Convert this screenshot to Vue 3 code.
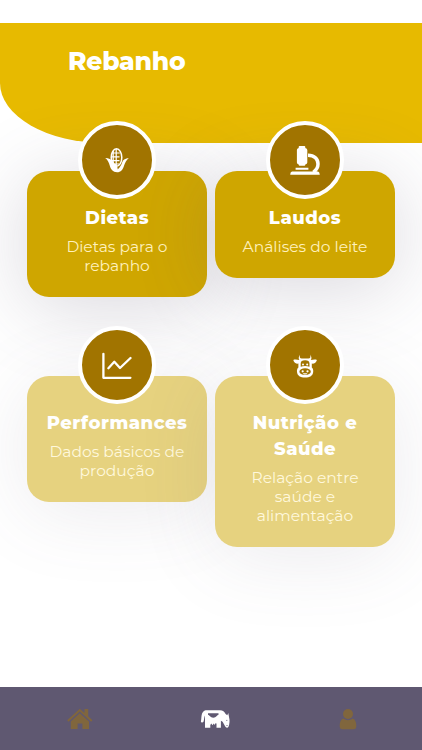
<template>
  <div class="screen">
    <header class="header">
      <h1>Rebanho</h1>
    </header>

    <main class="cards">
      <div
        v-for="card in cards"
        :key="card.id"
        class="card"
        :class="{ disabled: card.disabled }"
      >
        <div class="card-icon">
          <!-- Corn -->
          <svg v-if="card.icon === 'corn'" width="24" height="26" viewBox="0 0 24 26">
            <ellipse cx="11.500" cy="10.500" rx="5.300" ry="8.800" fill="none" stroke="#fff" stroke-width="1.500" />
            <path d="M11.200 2v17M8.200 4v12M6.800 6h8M6 9.800h8.500M6 13.600h8.500M9 17h5" fill="none" stroke="#fff" stroke-width="1.200" />
            <path d="M.2 11C3.500 11 6.500 12.300 8.400 15c1.400 2.100 3 4.800 4.200 7.500 2.600-2.400 4-4.800 4.700-7.500 1-2.500 3.200-3.700 6.500-4-2.500 2.200-3.700 4.600-4.700 7.500-1.200 4-3.300 6.800-7 6.800-4.200 0-6.400-3-7.300-6.500C4 15.500 2.800 13 .2 11z" fill="#fff" />
            <path d="M9.500 16.500c2.200.8 3.200 2.500 3.100 6.500l-2 .5-3-6z" fill="#fff" />
          </svg>
          <!-- Microscope -->
          <svg v-else-if="card.icon === 'microscope'" width="30" height="30" viewBox="0 0 30 30">
            <path d="M9.500 1h4.800q1 0 1 1v1q2 .5 2 2v12.500q0 1.700-2 2.100v.1q0 1-1 1H9.700q-1 0-1-1v-.1q-1.800-.5-1.800-2.100V5q0-1.500 1.800-2V2q0-1 .8-1z" fill="#fff" />
            <path d="M18 10.200c6.500 0 10 4.100 10 8.800 0 3.600-1.600 6-4.700 8.300" fill="none" stroke="#fff" stroke-width="3.500" />
            <path d="M5.600 22.800h12.800v2H5.600zM2 26.600h26q1.600.5 1.800 3.200H.2Q.2 27.100 2 26.600z" fill="#fff" />
          </svg>
          <!-- Line chart -->
          <svg v-else-if="card.icon === 'chart'" class="icon-line" width="30" height="28" viewBox="0 0 30 28">
            <path d="M1.400 2.800v24h27" />
            <path d="M6.400 17.200l5.900-6.400 5.700 6.200L28.500 7" />
          </svg>
          <!-- Cow face -->
          <svg v-else class="icon-cow" width="24" height="24" viewBox="0 0 24 24">
            <path d="M7.100.4c-.8 2.300-.3 4 1.700 4.200h6.600c2-.2 2.500-1.900 1.700-4.200 1.700 2.400 1.700 4.400.7 5.600 2.300-.6 4.800-.8 6.100-.1-.6 2.500-2.600 4-5.100 3.700v4c1.200 1 1.600 2.600 1.400 4.300-.4 3.700-3.200 5.500-8.100 5.500s-7.700-1.800-8.100-5.500c-.2-1.700.2-3.300 1.400-4.300v-4C2.900 9.900.9 8.400.3 5.900c1.300-.7 3.800-.5 6.100.1C5.400 4.800 5.400 2.800 7.100.4z" fill="#fff" />
            <path d="M7.700 12.700V9.500c0-2 1.600-3.200 4.400-3.200s4.400 1.200 4.400 3.200v3.200c-2.500-1-6.300-1-8.800 0z" fill="#a17400" />
            <ellipse cx="12.100" cy="17.700" rx="5.700" ry="3.400" fill="#a17400" />
            <g fill="#fff">
              <circle cx="10" cy="10.600" r="1" />
              <circle cx="14.200" cy="10.600" r="1" />
              <circle cx="9.700" cy="17.300" r="1.100" />
              <circle cx="14.500" cy="17.300" r="1.100" />
              <path d="M9.800 19.200h4.600l-1 1.200h-2.600z" />
            </g>
          </svg>
        </div>
        <h2>{{ card.title }}</h2>
        <p>{{ card.text }}</p>
      </div>
    </main>

    <nav class="tab-bar">
      <button class="tab" aria-label="Início">
        <svg width="26" height="22" viewBox="0 0 26 22">
          <path d="M12.800.8 17.500 5V1h3.700v7.300l4.200 4-1.300 1.500L12.800 3.500 1.500 13.800.2 12.300z" />
          <path d="M12.800 5.300 22 13.600V21h-6.600v-5.500h-4.800V21H3.800v-7.400z" />
        </svg>
      </button>
      <button class="tab active" aria-label="Rebanho">
        <svg width="30" height="20" viewBox="0 0 30 20">
          <path d="M5.500 1.200H20c2.800 0 4.600 1.500 5.600 3.800l1.700 1.200L28.300 4l.8 4.500c.8 2.500.5 6.500-.5 9-.8 1.700-2.700 1.500-3.500-.2l-2.500-4.500-1.700-1v6.900h-4.400v-4.300l-1.100-.2-.6 1.700-1.100-1.300-1.200 1.700-1.200-1.700-1 1.300v2.800H5V6.500C4 8.500 4.200 10.500 3.600 12.500c-.5 1.300-2.400 1.500-2.700 0C1.800 9.500.5 2.500 5.500 1.200z" />
          <path d="M8 4.200h10.500v1.600c-1.400.3-2.200 2.900-5.200 2.900S9.400 6.100 8 5.800z" fill="#5f5871" />
          <path d="M26.800 11.300v.1M27 16.500v.1" fill="none" stroke="#5f5871" stroke-width="1" stroke-linecap="round" />
        </svg>
      </button>
      <button class="tab" aria-label="Perfil">
        <svg width="18" height="22" viewBox="0 0 18 22">
          <circle cx="9" cy="6" r="5" />
          <path d="M4.200 10.500Q9 14 13.800 10.500c2.400 1 3.600 4 3.500 7.500q0 3.200-3 3.200H3.700q-3 0-3-3.200c-.1-3.500 1.100-6.500 3.500-7.500z" />
        </svg>
      </button>
    </nav>
  </div>
</template>

<script setup>
import { ref } from 'vue'

const cards = ref([
  { id: 1, icon: 'corn', title: 'Dietas', text: 'Dietas para o\nrebanho', disabled: false },
  { id: 2, icon: 'microscope', title: 'Laudos', text: 'Análises do leite', disabled: false },
  { id: 3, icon: 'chart', title: 'Performances', text: 'Dados básicos de\nprodução', disabled: true },
  { id: 4, icon: 'cow', title: 'Nutrição e\nSaúde', text: 'Relação entre\nsaúde e\nalimentação', disabled: true }
])
</script>

<style>
body {
  background: #ffffff;
}
</style>

<style scoped>
.screen {
  height: 750px;
  display: flex;
  flex-direction: column;
  overflow: hidden;
  padding-top: 23px;
  box-sizing: border-box;
  background: #ffffff;
  font-family: Montserrat, Inter, sans-serif;
}

.header {
  height: 120px;
  flex-shrink: 0;
  box-sizing: border-box;
  padding: 22px 68px 0;
  background: #e7ba00;
  border-bottom-left-radius: 105px 60px;
}

.header h1 {
  margin: 0;
  color: #ffffff;
  font-size: 25px;
  line-height: 32px;
  font-weight: 800;
  letter-spacing: -0.2px;
}

.cards {
  flex: 1;
  display: grid;
  grid-template-columns: 180px 180px;
  grid-template-rows: 126px 171px;
  column-gap: 8px;
  row-gap: 79px;
  align-items: start;
  justify-content: center;
  padding-top: 28px;
}

.card {
  position: relative;
  padding: 34px 0 22px;
  border-radius: 22px;
  background: #cfa600;
  box-shadow: 0 10px 80px rgba(95, 88, 113, 0.24);
  text-align: center;
  white-space: pre-line;
}

.card-icon {
  position: absolute;
  top: -50.5px;
  left: 51px;
  width: 70px;
  height: 70px;
  display: flex;
  align-items: center;
  justify-content: center;
  border: 4px solid #ffffff;
  border-radius: 50%;
  background: #a17400;
}

.icon-line {
  fill: none;
  stroke: #ffffff;
  stroke-width: 2.3;
  stroke-linecap: round;
  stroke-linejoin: round;
}

.icon-cow {
  margin-top: 2px;
}

.card h2 {
  margin: 0 0 6px;
  color: #ffffff;
  font-size: 18px;
  line-height: 26px;
  font-weight: 800;
  letter-spacing: 0.5px;
}

.card p {
  margin: 0;
  color: #fff1bd;
  font-size: 15.5px;
  line-height: 19px;
  font-weight: 400;
}

.card.disabled {
  background: #e6d27f;
  box-shadow: 0 10px 80px rgba(95, 88, 113, 0.12);
}

.card.disabled p {
  color: #fff8dc;
}

.tab-bar {
  height: 63px;
  flex-shrink: 0;
  display: grid;
  grid-template-columns: 1fr 1fr 1fr;
  padding: 0 7px 0 13px;
  background: #5f5871;
}

.tab {
  display: flex;
  align-items: center;
  justify-content: center;
  padding: 0;
  border: none;
  background: none;
  cursor: pointer;
}

.tab svg {
  fill: #80663d;
}

.tab.active svg {
  margin-left: 2px;
  fill: #ffffff;
}
</style>
